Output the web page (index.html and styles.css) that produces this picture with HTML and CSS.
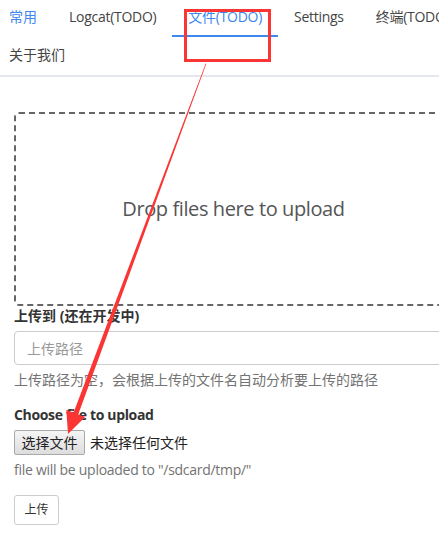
FILE: index.html
```html
<!DOCTYPE html>
<html lang="zh">
<head>
<meta charset="utf-8">
<title>文件</title>
<link rel="stylesheet" href="styles.css">
</head>
<body>
<div class="page">
  <div class="tabs-wrap">
    <nav class="tabs">
      <a class="tab link">常用</a>
      <a class="tab latin">Logcat(TODO)</a>
      <a class="tab active latin">文件(TODO)</a>
      <a class="tab latin">Settings</a>
      <a class="tab latin">终端(TODO)</a>
      <a class="tab">关于我们</a>
    </nav>
  </div>
  <main class="content">
    <div class="dropzone latin">Drop files here to upload</div>
    <div class="group">
      <label class="label">上传到 (还在开发中)</label>
      <input class="control" type="text" placeholder="上传路径">
      <p class="help">上传路径为空，会根据上传的文件名自动分析要上传的路径</p>
    </div>
    <div class="group">
      <label class="label latin-bold">Choose file to upload</label>
      <div class="file">
        <button class="file-btn" type="button">选择文件</button>
        <span class="file-name">未选择任何文件</span>
      </div>
      <p class="help latin">file will be uploaded to "/sdcard/tmp/"</p>
    </div>
    <button class="btn" type="button">上传</button>
  </main>
  <svg class="annot" width="439" height="537" viewBox="0 0 439 537">
    <rect x="185.5" y="10.5" width="84" height="50" fill="none" stroke="#fb3434" stroke-width="3"/>
    <polygon fill="#fb3434" points="206.3,63.8 205.7,63.6 73.6,412.6 66.3,409.9 68,434 85.1,416.9 78.2,414.4"/>
  </svg>
</div>
</body>
</html>
```
FILE: styles.css
```css
html, body {
  margin: 0;
  padding: 0;
  overflow: hidden;
  background: #fff;
}
body {
  font-family: "Open Sans", "Noto Sans CJK SC", sans-serif;
  font-size: 14px;
  line-height: 20px;
  color: #333;
}
.page {
  position: relative;
  width: 520px;
  height: 537px;
}
.latin {
  letter-spacing: -0.02em;
}
.latin-bold {
  letter-spacing: -0.025em;
}
.tabs-wrap {
  border-bottom: 2px solid #e4e7ed;
  width: 520px;
}
.tabs {
  display: flex;
  flex-wrap: wrap;
  width: 500px;
  margin-left: -7px;
}
.tab {
  position: relative;
  height: 37.5px;
  line-height: 34px;
  padding: 0 16px;
  color: #444;
  font-size: 14px;
  white-space: nowrap;
}
.tab.link,
.tab.active {
  color: #3e87ef;
}
.tab.active::after {
  content: "";
  position: absolute;
  left: 0;
  right: 0;
  bottom: 1px;
  height: 2px;
  background: #3e87ef;
}
.content {
  width: 439px;
  padding: 35px 14px 0;
}
.dropzone {
  box-sizing: border-box;
  height: 194px;
  border: 2px dashed #666;
  border-radius: 5px;
  display: flex;
  align-items: center;
  justify-content: center;
  font-size: 20px;
  color: #555;
}
.group {
  margin-bottom: 15px;
}
.label {
  display: block;
  font-weight: bold;
  margin-bottom: 5px;
}
.control {
  display: block;
  box-sizing: border-box;
  width: 100%;
  height: 34px;
  padding: 6px 12px;
  border: 1px solid #ccc;
  border-radius: 4px;
  font: inherit;
  color: #555;
  outline: none;
}
.control::placeholder {
  color: #999;
}
.help {
  margin: 5px 0 0;
  color: #737373;
}
.file {
  display: flex;
  align-items: center;
  gap: 5px;
}
.file-btn {
  box-sizing: border-box;
  height: 25px;
  width: 71px;
  padding: 0;
  border: 1px solid #a9a9a9;
  border-radius: 2px;
  background: linear-gradient(#f5f5f5, #dddddd);
  font: inherit;
  font-size: 14px;
  color: #222;
}
.file-name {
  color: #222;
}
.btn {
  box-sizing: border-box;
  height: 30px;
  width: 45px;
  padding: 0;
  border: 1px solid #ccc;
  border-radius: 3px;
  background: #fff;
  font: inherit;
  font-size: 12px;
  color: #333;
}
.annot {
  position: absolute;
  left: 0;
  top: 0;
  pointer-events: none;
}
```
